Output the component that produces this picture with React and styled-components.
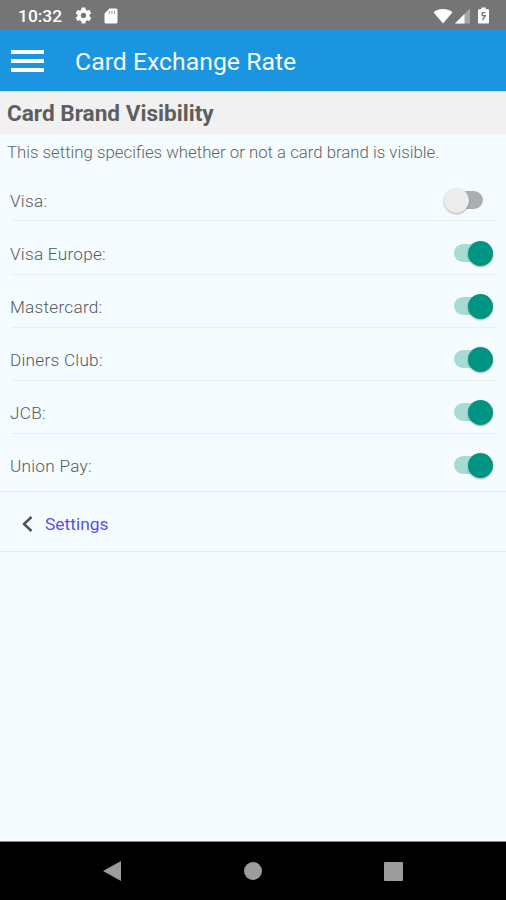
import React, { useState } from 'react';
import styled, { createGlobalStyle } from 'styled-components';

const GlobalStyle = createGlobalStyle`
  * {
    box-sizing: border-box;
  }

  body {
    margin: 0;
    background: #f5fcff;
    font-family: Roboto, 'Liberation Sans', sans-serif;
  }
`;

const Screen = styled.div`
  display: flex;
  flex-direction: column;
  width: 100%;
  height: 100vh;
  overflow: hidden;
  background: #f5fcff;
`;

const StatusBar = styled.div`
  display: flex;
  align-items: center;
  flex: none;
  height: 30px;
  padding: 1px 17px 0 18px;
  background: #757575;
  color: #fff;
`;

const Clock = styled.span`
  width: 56px;
  font-size: 17.4px;
  font-weight: 500;
  line-height: 28px;
`;

const StatusIcons = styled.div`
  display: flex;
  align-items: center;
  gap: ${({ $gap }) => $gap}px;
  margin-left: ${({ $right }) => ($right ? 'auto' : '0')};

  svg {
    display: block;
  }
`;

const Header = styled.header`
  display: flex;
  align-items: center;
  flex: none;
  height: 62px;
  padding: 1px 11px 0;
  background: #1b95e0;
  border-bottom: 1px solid #c9e5f6;
`;

const MenuButton = styled.button`
  display: flex;
  flex-direction: column;
  gap: 5px;
  width: 33px;
  margin-right: 31px;
  padding: 0;
  background: none;
  border: none;
  cursor: pointer;
`;

const MenuLine = styled.span`
  height: 4px;
  background: #fff;
`;

const Title = styled.h1`
  margin: 0;
  padding-top: 2px;
  font-size: 24.8px;
  font-weight: 400;
  line-height: 30px;
  color: #f2faff;
`;

const SectionTitle = styled.h2`
  flex: none;
  height: 42px;
  margin: 0;
  padding: 0 7px;
  background: #f1f1f1;
  color: #5e5e5e;
  font-size: 22.6px;
  font-weight: 700;
  line-height: 44px;
`;

const Description = styled.p`
  height: 34px;
  margin: 0;
  padding: 0 7px;
  color: #5f6365;
  font-size: 16.8px;
  font-weight: 300;
  line-height: 36px;
  white-space: nowrap;
`;

const BrandList = styled.div`
  height: 324px;
  padding: 0 10px 0 11px;
  border-bottom: 1px solid #e6edf0;
`;

const BrandRow = styled.div`
  display: flex;
  align-items: center;
  justify-content: space-between;
  height: 53px;
  padding: 12px 0 2px;
  border-bottom: 1px solid #e8eff2;

  &:first-child {
    padding-bottom: 0;
  }

  &:nth-child(2) {
    height: 54px;
    padding-top: 13px;
  }

  &:last-child {
    border-bottom-color: transparent;
  }
`;

const BrandName = styled.span`
  margin-left: -1px;
  padding-top: 1px;
  color: #55595b;
  font-size: 17.2px;
  font-weight: 300;
  line-height: 20px;
  letter-spacing: 0.25px;
`;

const Track = styled.button`
  display: flex;
  align-items: center;
  justify-content: ${({ $on }) => ($on ? 'flex-end' : 'flex-start')};
  width: ${({ $on }) => ($on ? '33px' : '29px')};
  height: 18px;
  margin-right: ${({ $on }) => ($on ? '9px' : '13px')};
  padding: 0;
  border: none;
  border-radius: 9px;
  background: ${({ $on }) => ($on ? '#a6dcd5' : '#a9afb1')};
  cursor: pointer;
`;

const Thumb = styled.span`
  flex: none;
  width: 25px;
  height: 25px;
  margin: 0 ${({ $on }) => ($on ? '-6px' : '0')} 0 ${({ $on }) => ($on ? '0' : '-10px')};
  border-radius: 50%;
  background: ${({ $on }) => ($on ? '#009482' : '#ececec')};
  box-shadow: 0 1px 2px rgba(0, 0, 0, 0.32);
`;

const BackRow = styled.div`
  display: flex;
  align-items: center;
  height: 60px;
  padding: 5px 0 0 22px;
  border-bottom: 1px solid #e6edf0;
  cursor: pointer;
`;

const BackLabel = styled.span`
  margin-left: 12px;
  color: #5a50e6;
  font-size: 17.4px;
  font-weight: 400;
`;

const NavBar = styled.nav`
  display: flex;
  align-items: center;
  justify-content: space-between;
  flex: none;
  height: 59px;
  margin-top: auto;
  padding: 0 103px;
  border-top: 1px solid #858889;
  background: #000;
`;

const BRANDS = ['Visa', 'Visa Europe', 'Mastercard', 'Diners Club', 'JCB', 'Union Pay'];

function GearIcon() {
  return (
    <svg width="19" height="19" viewBox="0 0 24 24" fill="#fff">
      <path d="M19.43 12.98c.04-.32.07-.64.07-.98s-.03-.66-.07-.98l2.11-1.65c.19-.15.24-.42.12-.64l-2-3.46c-.12-.22-.39-.3-.61-.22l-2.49 1c-.52-.4-1.08-.73-1.69-.98l-.38-2.65C14.46 2.18 14.25 2 14 2h-4c-.25 0-.46.18-.49.42l-.38 2.65c-.61.25-1.17.59-1.69.98l-2.49-1c-.23-.09-.49 0-.61.22l-2 3.46c-.13.22-.07.49.12.64l2.11 1.65c-.04.32-.07.65-.07.98s.03.66.07.98l-2.11 1.65c-.19.15-.24.42-.12.64l2 3.46c.12.22.39.3.61.22l2.49-1c.52.4 1.08.73 1.69.98l.38 2.65c.03.24.24.42.49.42h4c.25 0 .46-.18.49-.42l.38-2.65c.61-.25 1.17-.59 1.69-.98l2.49 1c.23.09.49 0 .61-.22l2-3.46c.12-.22.07-.49-.12-.64l-2.11-1.65zM12 15.5c-1.93 0-3.5-1.57-3.5-3.5s1.57-3.5 3.5-3.5 3.5 1.57 3.5 3.5-1.57 3.5-3.5 3.5z" />
    </svg>
  );
}

function SdCardIcon() {
  return (
    <svg width="14" height="16" viewBox="0 0 13 16">
      <path d="M5 0.5h6.5a1.5 1.5 0 0 1 1.5 1.5v12a1.5 1.5 0 0 1-1.5 1.5h-10A1.5 1.5 0 0 1 0 14V5.5z" fill="#fff" />
      <path d="M4.8 3v3M7.4 3v3M10 3v3" stroke="#a2a2a2" strokeWidth="1.1" />
    </svg>
  );
}

function WifiIcon() {
  return (
    <svg width="20" height="16" viewBox="0 0 20 16">
      <path d="M0.5 4.2C5.5-0.2 14.5-0.2 19.5 4.2L10 15.5z" fill="#fff" />
    </svg>
  );
}

function SignalIcon() {
  return (
    <svg width="15" height="16" viewBox="0 0 15 16">
      <path d="M0 15.5L15 0.5v15z" fill="#a5a5a5" />
      <path d="M0 15.5L9.5 6v9.5z" fill="#fff" />
    </svg>
  );
}

function BatteryIcon() {
  return (
    <svg width="11" height="17" viewBox="0 0 11 17">
      <path d="M3.3 0.5h4.4v1.8H10a1 1 0 0 1 1 1v12.2a1 1 0 0 1-1 1H1a1 1 0 0 1-1-1V3.3a1 1 0 0 1 1-1h2.3z" fill="#fff" />
      <path d="M7.4 5.6H4.2v3h3l-2.6 4.6" fill="none" stroke="#757575" strokeWidth="1.4" />
    </svg>
  );
}

function App() {
  const [visible, setVisible] = useState({
    'Visa': false,
    'Visa Europe': true,
    'Mastercard': true,
    'Diners Club': true,
    'JCB': true,
    'Union Pay': true,
  });

  const toggleBrand = (brand) => {
    setVisible({ ...visible, [brand]: !visible[brand] });
  };

  return (
    <Screen>
      <GlobalStyle />
      <StatusBar>
        <Clock>10:32</Clock>
        <StatusIcons $gap={11}>
          <GearIcon />
          <SdCardIcon />
        </StatusIcons>
        <StatusIcons $gap={8} $right>
          <StatusIcons $gap={2}>
            <WifiIcon />
            <SignalIcon />
          </StatusIcons>
          <BatteryIcon />
        </StatusIcons>
      </StatusBar>

      <Header>
        <MenuButton aria-label="Menu">
          <MenuLine />
          <MenuLine />
          <MenuLine />
        </MenuButton>
        <Title>Card Exchange Rate</Title>
      </Header>

      <SectionTitle>Card Brand Visibility</SectionTitle>
      <Description>This setting specifies whether or not a card brand is visible.</Description>

      <BrandList>
        {BRANDS.map((brand) => (
          <BrandRow key={brand}>
            <BrandName>{brand}:</BrandName>
            <Track $on={visible[brand]} onClick={() => toggleBrand(brand)} aria-label={brand}>
              <Thumb $on={visible[brand]} />
            </Track>
          </BrandRow>
        ))}
      </BrandList>

      <BackRow>
        <svg width="11" height="16" viewBox="0 0 11 16" fill="none" stroke="#4c4f50" strokeWidth="2.4">
          <path d="M9.5 1L2 8l7.5 7" />
        </svg>
        <BackLabel>Settings</BackLabel>
      </BackRow>

      <NavBar>
        <svg width="18" height="20" viewBox="0 0 18 20">
          <path d="M0 10L18 0v20z" fill="#9c9c9c" />
        </svg>
        <svg width="18" height="18" viewBox="0 0 18 18">
          <circle cx="9" cy="9" r="9" fill="#9c9c9c" />
        </svg>
        <svg width="19" height="19" viewBox="0 0 19 19">
          <rect width="19" height="19" rx="1" fill="#9c9c9c" />
        </svg>
      </NavBar>
    </Screen>
  );
}

export default App;
